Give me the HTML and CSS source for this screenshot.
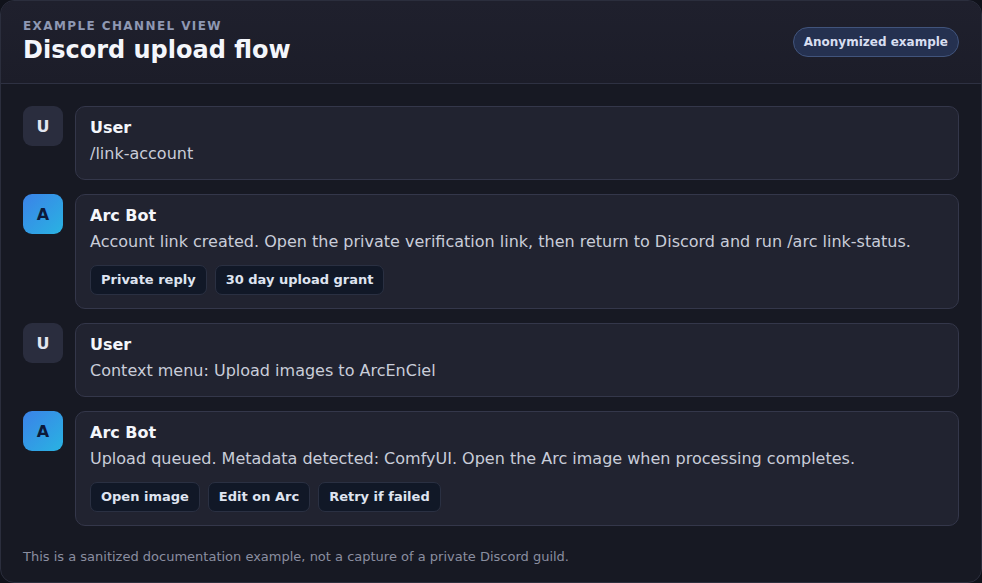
FILE: index.html
```html
<!DOCTYPE html>
<html lang="en">

<head>
    <meta charset="utf-8">
    <meta name="viewport" content="width=device-width, initial-scale=1">
    <title>Discord upload flow</title>
    <link rel="stylesheet" href="styles.css">
</head>

<body>
    <main class="channel">
        <header class="channel-head">
            <div class="channel-title">
                <p class="eyebrow">Example channel view</p>
                <h1>Discord upload flow</h1>
            </div>
            <span class="badge">Anonymized example</span>
        </header>

        <section class="feed">
            <article class="msg">
                <div class="avatar avatar--user">U</div>
                <div class="bubble">
                    <h2 class="author">User</h2>
                    <p class="text">/link-account</p>
                </div>
            </article>

            <article class="msg">
                <div class="avatar avatar--bot">A</div>
                <div class="bubble">
                    <h2 class="author">Arc Bot</h2>
                    <p class="text">Account link created. Open the private verification link, then return to Discord and run /arc link-status.</p>
                    <div class="actions">
                        <span class="chip">Private reply</span>
                        <span class="chip">30 day upload grant</span>
                    </div>
                </div>
            </article>

            <article class="msg">
                <div class="avatar avatar--user">U</div>
                <div class="bubble">
                    <h2 class="author">User</h2>
                    <p class="text">Context menu: Upload images to ArcEnCiel</p>
                </div>
            </article>

            <article class="msg">
                <div class="avatar avatar--bot">A</div>
                <div class="bubble">
                    <h2 class="author">Arc Bot</h2>
                    <p class="text">Upload queued. Metadata detected: ComfyUI. Open the Arc image when processing completes.</p>
                    <div class="actions">
                        <span class="chip">Open image</span>
                        <span class="chip">Edit on Arc</span>
                        <span class="chip">Retry if failed</span>
                    </div>
                </div>
            </article>
        </section>

        <footer class="note">This is a sanitized documentation example, not a capture of a private Discord guild.</footer>
    </main>
</body>

</html>
```

FILE: styles.css
```css
html {
    box-sizing: border-box;
    height: 100%;
}

*,
*:before,
*:after {
    box-sizing: inherit;
}

body {
    background: #10121a;
    color: #c9cdd9;
    font-family: "DejaVu Sans", Verdana, sans-serif;
    height: 100%;
    margin: 0;
}

.channel {
    background: #171923;
    border: 1px solid #2b2e3d;
    border-radius: 14px;
    display: flex;
    flex-direction: column;
    height: 100%;
    overflow: hidden;
}

.channel-head {
    align-items: center;
    background: linear-gradient(180deg, #1f202d, #1c1d29);
    border-bottom: 1px solid #2e3142;
    display: flex;
    height: 83px;
    justify-content: space-between;
    padding: 0 22px;
}

.eyebrow {
    color: #8e98b3;
    font-size: 12px;
    font-weight: bold;
    letter-spacing: 1.4px;
    margin: 0 0 2px;
    text-transform: uppercase;
}

h1 {
    color: #f4f6fb;
    font-size: 24px;
    line-height: 30px;
    margin: 0;
}

.badge {
    background: #253150;
    border: 1px solid #41547c;
    border-radius: 999px;
    color: #d8def0;
    font-size: 12px;
    font-weight: bold;
    padding: 7px 10px;
}

.feed {
    display: flex;
    flex: 1;
    flex-direction: column;
    gap: 14px;
    padding: 22px 22px 0;
}

.msg {
    display: flex;
    gap: 12px;
}

.avatar {
    align-items: center;
    border-radius: 9px;
    display: flex;
    flex: none;
    font-size: 16px;
    font-weight: bold;
    height: 40px;
    justify-content: center;
    width: 40px;
}

.avatar--user {
    background: #2a2d3e;
    color: #e2e6f0;
}

.avatar--bot {
    background: linear-gradient(135deg, #3b82e8, #29b3e2);
    color: #0c1a3a;
}

.bubble {
    background: #212330;
    border: 1px solid #34374a;
    border-radius: 10px;
    flex: 1;
    padding: 9px 14px 13px;
}

.author {
    color: #f4f6fb;
    font-size: 16px;
    line-height: 24px;
    margin: 0 0 2px;
}

.text {
    font-size: 16px;
    line-height: 24px;
    margin: 0;
}

.actions {
    display: flex;
    gap: 8px;
    margin-top: 11px;
}

.chip {
    background: #111827;
    border: 1px solid #2a3042;
    border-radius: 7px;
    color: #dfe4f0;
    font-size: 13px;
    font-weight: bold;
    line-height: 16px;
    padding: 6px 10px;
}

.note {
    color: #8a8ea0;
    font-size: 13px;
    padding: 0 22px 18px;
}
```
